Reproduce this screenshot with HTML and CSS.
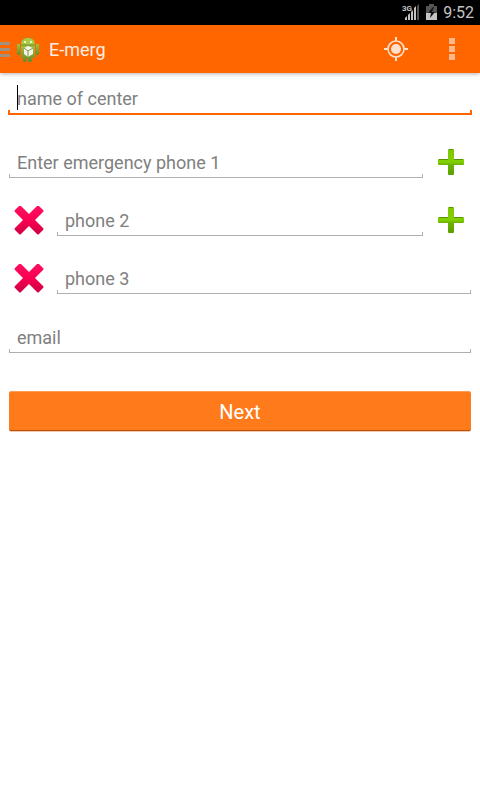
FILE: index.html
```
<!DOCTYPE html>
<html lang="en">
<head>
<meta charset="utf-8">
<meta name="viewport" content="width=device-width, initial-scale=1">
<title>E-merg</title>
<link rel="stylesheet" href="styles.css">
</head>
<body>
<div class="status">
  <svg class="signal" width="18" height="18" viewBox="0 0 18 18" aria-hidden="true">
    <text class="network" x="0" y="8">3G</text>
    <path d="M3 17v-2l2-2v4zM6 17v-5l2-2v7zM9 17v-8l2-2v10zM12 17V5l2-2v14z" fill="#c4c4c4"/>
    <path d="M15 17V3l2-2v16z" fill="#555"/>
  </svg>
  <svg class="battery" width="11" height="16" viewBox="0 0 11 16" aria-hidden="true">
    <path d="M3 0h5v2h3v7H0V2h3z" fill="#555"/>
    <path d="M0 9h11v7H0z" fill="#c4c4c4"/>
    <path d="M7 3L2 9h3l-1 5 5-6H6l2-5z" fill="#111"/>
  </svg>
  <time class="clock">9:52</time>
</div>
<header class="bar">
  <button class="home" type="button" aria-label="Open navigation">
    <svg width="42" height="32" viewBox="0 0 42 32" aria-hidden="true">
      <defs>
        <linearGradient id="droid" x1="0" y1="0" x2="0" y2="1">
          <stop offset="0" stop-color="#a4c441"/>
          <stop offset="1" stop-color="#668a28"/>
        </linearGradient>
      </defs>
      <path d="M0 9h10v3H0zM0 15h10v3H0zM0 21h10v3H0z" fill="#a1917f"/>
      <path d="M23 3l2 3M33 3l-2 3" stroke="#8c9a30" stroke-width="1"/>
      <path d="M21 12c0-5 3-7 7-7s7 2 7 7z" fill="#a9cb45"/>
      <circle cx="25" cy="9" r="1" fill="#fff"/><circle cx="31" cy="9" r="1" fill="#fff"/>
      <path d="M21 12h14v11q0 2-2 2h-1v3q0 1-2 1t-2-1v-3h-1v3q0 1-2 1t-2-1v-3q-2 0-2-2z" fill="url(#droid)"/>
      <path d="M21 12h14" stroke="#6d8a2a" stroke-width="1"/>
      <rect x="17" y="11" width="3" height="11" rx="1" fill="url(#droid)"/>
      <rect x="36" y="11" width="3" height="11" rx="1" fill="url(#droid)"/>
      <path d="M24 15l4-2 5 2v6l-5 3-4-3z" fill="#f3f6e9"/>
      <path d="M24 15l4 3 5-3M28 18v6" fill="none" stroke="#83963f" stroke-width="1"/>
    </svg>
  </button>
  <h1 class="title">E-merg</h1>
  <button class="action" type="button" aria-label="Locate me">
    <svg width="24" height="24" viewBox="0 0 24 24" aria-hidden="true">
      <circle cx="12" cy="12" r="5" fill="#ffe0cc"/>
      <circle cx="12" cy="12" r="8" fill="none" stroke="#ffe0cc" stroke-width="1.600"/>
      <path d="M12 0v4M12 20v4M0 12h4M20 12h4" stroke="#ffe0cc" stroke-width="2"/>
    </svg>
  </button>
  <button class="action" type="button" aria-label="More options">
    <svg width="24" height="24" viewBox="0 0 24 24" aria-hidden="true">
      <path d="M9 1h6v6H9zM9 9h6v6H9zM9 17h6v6H9z" fill="#ffb68a"/>
    </svg>
  </button>
</header>
<svg class="defs" width="0" height="0" aria-hidden="true">
  <defs>
    <linearGradient id="green" x1="0" y1="0" x2="0" y2="1">
      <stop offset="0" stop-color="#7fc800"/>
      <stop offset=".5" stop-color="#82d000"/>
      <stop offset=".6" stop-color="#6cb400"/>
      <stop offset="1" stop-color="#5c9e00"/>
    </linearGradient>
    <linearGradient id="red" x1="0" y1="0" x2="0" y2="1">
      <stop offset="0" stop-color="#ff1060"/>
      <stop offset=".5" stop-color="#fa0052"/>
      <stop offset="1" stop-color="#cc0044"/>
    </linearGradient>
    <symbol id="plus" viewBox="0 0 48 30">
      <path d="M26 1h4q1 0 1 1v9h9q1 0 1 1v4q0 1-1 1h-9v9q0 1-1 1h-4q-1 0-1-1v-9h-9q-1 0-1-1v-4q0-1 1-1h9V2q0-1 1-1z" fill="url(#green)"/>
      <path d="M26 1.500h4M16 11.500h9M31 11.500h9" stroke="#5c9208" stroke-width="1"/>
    </symbol>
    <symbol id="cross" viewBox="0 0 48 30">
      <path d="M10 0q1-1 2 0l8 8 8-8q1-1 2 0l4 4q1 1 0 2l-8 8 8 8q1 1 0 2l-4 4q-1 1-2 0l-8-8-8 8q-1 1-2 0l-4-4q-1-1 0-2l8-8-8-8q-1-1 0-2z" fill="url(#red)"/>
    </symbol>
  </defs>
</svg>
<form class="form">
  <div class="field focused"><span class="caret"></span><input type="text" aria-label="Name of center" placeholder="name of center"></div>
  <div class="row first">
    <div class="field"><input type="tel" aria-label="Emergency phone 1" placeholder="Enter emergency phone 1"></div>
    <button class="icon" type="button" aria-label="Add phone"><svg width="48" height="30"><use href="#plus"/></svg></button>
  </div>
  <div class="row">
    <button class="icon" type="button" aria-label="Remove phone 2"><svg width="48" height="30"><use href="#cross"/></svg></button>
    <div class="field"><input type="tel" aria-label="Phone 2" placeholder="phone 2"></div>
    <button class="icon" type="button" aria-label="Add phone"><svg width="48" height="30"><use href="#plus"/></svg></button>
  </div>
  <div class="row">
    <button class="icon" type="button" aria-label="Remove phone 3"><svg width="48" height="30"><use href="#cross"/></svg></button>
    <div class="field"><input type="tel" aria-label="Phone 3" placeholder="phone 3"></div>
  </div>
  <div class="row last">
    <div class="field"><input type="email" aria-label="Email" placeholder="email"></div>
  </div>
  <button class="next" type="submit">Next</button>
</form>
</body>
</html>
```
FILE: styles.css
```
* {
  box-sizing: border-box;
}

body {
  margin: 0;
  background: #fff;
  font-family: Roboto, "Noto Sans", sans-serif;
}

button {
  border: 0;
  padding: 0;
  background: none;
  font-family: inherit;
}

svg {
  display: block;
  overflow: visible;
}

.defs {
  position: absolute;
}

.status {
  display: flex;
  align-items: center;
  justify-content: flex-end;
  gap: 6px;
  height: 25px;
  padding-right: 6px;
  background: #000;
}

.signal {
  margin-bottom: 2px;
}

.network {
  fill: #c4c4c4;
  font-size: 8px;
  font-weight: 700;
}

.battery {
  margin-bottom: 2px;
}

.clock {
  color: #c4c4c4;
  font-size: 16px;
  line-height: 25px;
}

.bar {
  display: flex;
  align-items: center;
  height: 48px;
  background: #ff6600;
  box-shadow: 0 1px 4px rgba(0, 0, 0, 0.3);
}

.title {
  flex: 1;
  margin: 0 0 0 7px;
  padding-top: 2px;
  color: #ffeee4;
  font-size: 18px;
  font-weight: 400;
  line-height: 24px;
}

.action {
  display: flex;
  align-items: center;
  justify-content: center;
  width: 56px;
  height: 48px;
}

.form {
  padding: 12px 9px;
}

.row {
  display: flex;
  margin-top: 28px;
}

.first {
  margin-top: 33px;
}

.last {
  margin-top: 29px;
}

.field {
  position: relative;
  flex: 1;
  height: 30px;
  background:
    linear-gradient(#b0b0b0, #b0b0b0) left bottom / 1px 4px no-repeat,
    linear-gradient(#b0b0b0, #b0b0b0) right bottom / 1px 4px no-repeat,
    linear-gradient(#b0b0b0, #b0b0b0) left bottom / 100% 1px no-repeat;
}

.focused {
  margin: 0 -1px;
  padding: 0 1px;
  background:
    linear-gradient(#ff6600, #ff6600) left bottom / 2px 5px no-repeat,
    linear-gradient(#ff6600, #ff6600) right bottom / 2px 5px no-repeat,
    linear-gradient(#ff6600, #ff6600) left bottom / 100% 2px no-repeat;
}

.field input {
  display: block;
  width: 100%;
  height: 100%;
  border: 0;
  padding: 0 8px 2px;
  outline: 0;
  background: none;
  color: #000;
  font-family: inherit;
  font-size: 18px;
}

.focused input {
  padding-bottom: 4px;
}

.field input::placeholder {
  color: #808080;
  opacity: 1;
}

.caret {
  position: absolute;
  top: 0;
  left: 9px;
  width: 1px;
  height: 25px;
  background: #000;
}

.icon {
  width: 48px;
  height: 30px;
}

.next {
  display: block;
  width: 100%;
  height: 40px;
  margin-top: 38px;
  border-top: 1px solid #ff9c55;
  border-bottom: 1px solid #b85010;
  border-radius: 2px;
  padding-top: 2px;
  background: #ff7a1a;
  box-shadow: 0 1px 0 #f5c9a8;
  color: #fff;
  font-size: 20px;
}
```
